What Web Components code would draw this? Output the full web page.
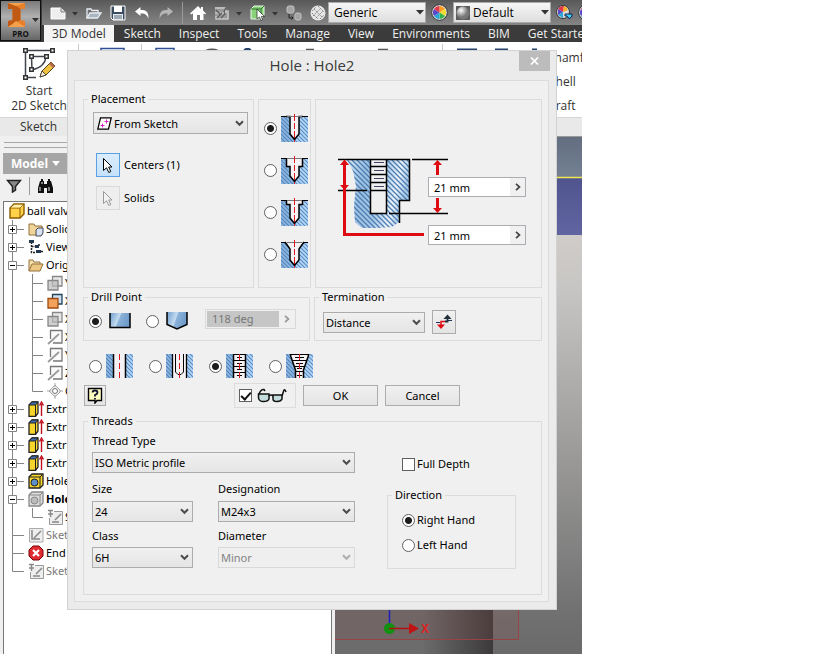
<!DOCTYPE html>
<html lang="en">
<head>
<meta charset="utf-8">
<title>Hole : Hole2</title>
<style>
  body { margin: 0; background: #fff; overflow: hidden; }
</style>
</head>
<body>
<cad-app></cad-app>
<script>
const UI = '"Open Sans", "Noto Sans", sans-serif';
const DLG = '"Noto Sans", "Open Sans", sans-serif';

function define(name, css, html) {
  const tpl = document.createElement('template');
  const render = typeof html === 'function' ? html : () => html;
  customElements.define(name, class extends HTMLElement {
    constructor() { super(); this.attachShadow({ mode: 'open' }); }
    connectedCallback() {
      if (this.shadowRoot.childNodes.length) return;
      tpl.innerHTML = `<style>*{box-sizing:border-box}:host{box-sizing:border-box}${css}</style>${render(this)}`;
      this.shadowRoot.append(tpl.content.cloneNode(true));
    }
  });
}

/* ---------- shared drawing parts ---------- */
const hatch = `<defs>
  <pattern id="h" width="4" height="4" patternUnits="userSpaceOnUse"><rect width="4" height="4" fill="#b4d8fa"/><path d="M-1 -1L5 5M-1 3L1 5M3 -1L5 1" stroke="#5c8cc0" stroke-width="1.2"/></pattern>
  <pattern id="k" width="4" height="4" patternUnits="userSpaceOnUse"><rect width="4" height="4" fill="#8db6e0"/><path d="M-1 -1L5 5M-1 3L1 5M3 -1L5 1" stroke="#5285bb" stroke-width="1.1"/></pattern></defs>`;
const holeIcon = (d) => `<svg width="27" height="28" viewBox="0 0 27 28">${hatch}
  <rect y="2" width="14" height="26" fill="url(#k)"/><rect x="14" y="2" width="13" height="26" fill="url(#h)"/>
  <path d="${d}" fill="#f4f1f4" stroke="#000" stroke-width="1.5"/><path d="M6 2.5H21" stroke="#777"/><path d="M0 2.5H5M22 2.5H27" stroke="#000"/>
  <path d="M13.5 0V28" fill="none" stroke="#e01822" stroke-dasharray="7 2 6 2"/></svg>`;
const HOLES = [
  ['Drilled', 'M5 2.5H9V20L13.5 25.5L18 20V2.5H22'],
  ['Counterbore', 'M5.5 2V10.5H9V20L13.5 25.5L18 20V10.5H21.5V2'],
  ['Spotface', 'M5.5 2V6.5H9V20L13.5 25.5L18 20V6.5H21.5V2'],
  ['Countersink', 'M4 2L9 9V20L13.5 25.5L18 20V9L23 2']
];
const threadIcon = (inner) => `<svg width="27" height="24" viewBox="0 0 27 24">${hatch}
  <rect width="14" height="24" fill="url(#k)"/><rect x="14" width="13" height="24" fill="url(#h)"/>${inner}
  <path d="M13.5 0V24" stroke="#e01822" stroke-dasharray="6 3"/></svg>`;
const THREADS = [
  ['Simple hole', '<path d="M7.5 -1V25H19.5V-1z" fill="#f4f1f4" stroke="#000" stroke-width="1.5"/>'],
  ['Clearance hole', '<path d="M6.5 -1V25H20.5V-1z" fill="#f4f1f4" stroke="#000" stroke-width="1.3"/><path d="M9.5 0V18L12 20.5H15L17.5 18V0" fill="none" stroke="#000"/>'],
  ['Tapped hole', '<path d="M7.5 -1V25H19.5V-1z" fill="#f4f1f4" stroke="#000" stroke-width="1.5"/><path d="M8 .5H19M8 6.5H19M8 12.5H19M8 18.5H19M11 3.5H16M11 9.5H16M11 15.5H16M11 21.5H16" stroke="#000"/>'],
  ['Taper tapped hole', '<path d="M4 -1L5 3L9.5 16V25H17.5V16L22 3L23 -1z" fill="#f4f1f4" stroke="#000" stroke-width="1.5"/><path d="M4 .5H23M6 6.5H21M8 12.5H19M10 17.5H17M9 3.5H18M10 9.5H17M11 14.5H16M11 21.5H16" stroke="#000"/>']
];

const radioCss = `
  input[type=radio]{appearance:none;flex:none;margin:0;width:13px;height:13px;border:1px solid #606060;border-radius:50%;background:#fff}
  input[type=radio]:checked{background:radial-gradient(circle,#1c1c1c 0 3px,#fff 4px)}
  label{display:flex;align-items:center}
  svg{display:block;flex:none}`;

/* ---------- small controls ---------- */
define('pick-list', `
  :host{display:grid;height:21px;font:11px ${DLG};color:#000}
  select{appearance:none;grid-area:1/1;width:100%;height:100%;margin:0;padding:0 18px 0 2px;border:1px solid #acacac;border-radius:0;background:linear-gradient(#f0f0f0,#e5e5e5);font:inherit;color:inherit}
  select:disabled{border-color:#d9d9d9;background:#efefef;color:#838383;opacity:1}
  .v,.i{grid-area:1/1;align-self:center;pointer-events:none}
  .v{justify-self:end;margin-right:4px}
  .i{margin-left:4px}
  :host([icon]) select{padding-left:20px}
  select:disabled~.v{opacity:.4}`,
  el => `<select aria-label="${el.getAttribute('label')}" ${el.hasAttribute('disabled') ? 'disabled' : ''}><option>${el.getAttribute('value')}</option></select>
  ${el.hasAttribute('icon') ? '<svg class="i" width="15" height="13" viewBox="0 0 15 13"><path d="M3.5 .8H14.2L11.5 12.2H.8z" fill="#fff" stroke="#000" stroke-width="1.3"/><path d="M9.5 2.5v4M7.5 4.5h4M5.5 6.5v4M3.5 8.5h4" stroke="#d02ad0"/></svg>' : ''}
  <svg class="v" width="9" height="7" viewBox="0 0 9 7"><path d="M1 1.2L4.5 4.8L8 1.2" fill="none" stroke="#4c4c4c" stroke-width="2"/></svg>`);

define('value-box', `
  :host{display:flex;min-width:0;height:20px;border:1px solid #abadb3;background:#f0f0f0;font:11px ${DLG};color:#000}
  input{flex:1;width:0;min-width:0;margin:0;border:0;padding:0 5px;background:#fff;font:inherit;color:inherit}
  button{width:15px;margin:0;padding:0;border:0;background:#f0f0f0;display:grid;place-items:center}
  path{stroke:#444}
  :host([disabled]){border-color:#d9d9d9;padding:1px;color:#777}
  :host([disabled]) input{background:#c6c6c6}
  :host([disabled]) path{stroke:#999}`,
  el => { const d = el.hasAttribute('disabled') ? 'disabled' : '';
    return `<input type="text" aria-label="${el.getAttribute('label')}" value="${el.getAttribute('value')}" ${d}><button aria-label="More ${el.getAttribute('label')}" ${d}><svg width="6" height="8" viewBox="0 0 6 8"><path d="M1 .8L4.5 4L1 7.2" fill="none" stroke-width="1.7"/></svg></button>`; });

define('push-button', `
  :host{display:block;height:21px}
  button{width:100%;height:100%;margin:0;padding:0;border:1px solid #acacac;background:linear-gradient(#f1f1f1,#e4e4e4);font:11px ${DLG};color:#000;display:grid;place-items:center}
  :host([pressed]) button{border-color:#5a9fe0;background:linear-gradient(#dcedfc,#c4e1fb)}
  :host([faint]) button{border-color:#dadada;background:#eee}
  ::slotted(svg){display:block}`,
  el => `<button ${el.hasAttribute('label') ? `aria-label="${el.getAttribute('label')}"` : ''} ${el.hasAttribute('faint') ? 'disabled' : ''}><slot></slot></button>`);

define('group-box', `
  :host{display:grid;font:11px/14px ${DLG};color:#000}
  fieldset{min-width:0;margin:0;padding:0;border:1px solid #dcdcdc}
  legend{margin-left:4px;padding:0 3px}
  .bare{margin-top:7px}`,
  el => el.hasAttribute('label') ? `<fieldset><legend>${el.getAttribute('label')}</legend><slot></slot></fieldset>`
    : `<fieldset class="bare"><slot></slot></fieldset>`);

/* ---------- dialog sections ---------- */
const arrow = (fill, line) => `<svg width="12" height="17" viewBox="0 0 12 17"><path d="M1.5 1.5V13.5L4.5 10.8L6.8 15.5L8.8 14.6L6.7 10H10z" fill="${fill}" stroke="${line}"/></svg>`;
define('placement-panel', `
  :host{display:grid}
  .in{display:grid;gap:9px;padding:6px 5px 0 9px}
  pick-list{height:22px;margin-bottom:10px}
  .r{display:flex;align-items:center;gap:4px;padding-left:3px}
  push-button{width:24px;height:24px}`,
  `<group-box label="Placement"><div class="in"><pick-list label="Placement" value="From Sketch" icon></pick-list>
   <div class="r"><push-button label="Centers" pressed>${arrow('#fff', '#000')}</push-button><span>Centers (1)</span></div>
   <div class="r"><push-button label="Solids" faint>${arrow('#f2f2f2', '#999')}</push-button><span>Solids</span></div></div></group-box>`);

define('hole-types', `:host{display:grid}${radioCss}
  .in{display:grid;gap:14px;padding:14px 0 0 5px} label{gap:4px}`,
  `<group-box><div class="in">${HOLES.map(([n, d], i) => `<label><input type="radio" name="hole" aria-label="${n}" ${i ? '' : 'checked'}>${holeIcon(d)}</label>`).join('')}</div></group-box>`);

define('hole-preview', `
  :host{display:grid;min-width:0}
  .in{display:grid;grid-template-columns:minmax(0,1fr);padding:56px 15px 0 22px}
  svg,.f{grid-area:1/1}
  .f{justify-self:end;width:98px;display:grid;grid-template-columns:minmax(0,1fr);gap:28px;align-content:start;padding-top:21px}`,
  `<group-box><div class="in"><svg width="112" height="82" viewBox="0 0 112 82">
    <defs><pattern id="p" width="5" height="5" patternUnits="userSpaceOnUse"><path d="M-1 -1L6 6M-1 4L1 6M4 -1L6 1" stroke="#4d7cb0" stroke-width="1.3"/></pattern>
    <linearGradient id="g" x2="1" y2=".25"><stop offset="0" stop-color="#cfe4f8"/><stop offset=".3" stop-color="#7fb0df"/><stop offset=".6" stop-color="#8ebae4"/><stop offset=".85" stop-color="#eaf5ff"/><stop offset="1" stop-color="#8fbbe5"/></linearGradient></defs>
    <path d="M9 4H71V44H61V66L54 71L40 72H24L17 66L16 50L18 30L15 15z" fill="url(#g)" opacity=".75"/>
    <path d="M9 4H71V44H61V66L54 71L40 72H24L17 66L16 50L18 30L15 15z" fill="url(#p)"/>
    <path d="M32.5 4V57.5H48.5V4" fill="#f0f0f0" stroke="#000" stroke-width="1.5"/>
    <path d="M33 10.5H48M33 18.5H48M33 26.5H48M33 34.5H48" stroke="#000" stroke-width="1.3"/>
    <path d="M36 6.5H46M36 14.5H46M36 22.5H46M36 30.5H46" stroke="#446"/>
    <path d="M0 3.5H71.5V44.5H61.5V67M74 3.5H110M0 34.5H29M51 57.5H110" fill="none" stroke="#000" stroke-width="1.5"/>
    <path d="M6.5 6V78.5H86" fill="none" stroke="#df0b12" stroke-width="3"/>
    <path d="M99.5 8V19M99.5 42V54" stroke="#df0b12" stroke-width="3"/>
    <path d="M6.5 3.5L11 9H2zM6.5 34L11 29H2zM99.5 4L104 9H95zM99.5 57L104 52H95z" fill="#df0b12"/></svg>
   <div class="f"><value-box label="thread depth" value="21 mm"></value-box><value-box label="hole depth" value="21 mm"></value-box></div></div></group-box>`);

const cup = d => `<svg width="22" height="18" viewBox="0 0 22 18"><defs><linearGradient id="g" x2="1" y2=".3"><stop offset="0" stop-color="#6e9fcf"/><stop offset=".5" stop-color="#c5dcf0"/><stop offset=".55" stop-color="#8ab1d8"/><stop offset="1" stop-color="#6f9ccb"/></linearGradient></defs><path d="${d}" fill="url(#g)" stroke="#000" stroke-width="1.5"/></svg>`;
define('drill-point', `:host{display:grid;min-width:0}${radioCss}
  .in{display:flex;align-items:center;padding:0 13px 0 5px;height:34px;gap:15px} label{gap:7px}
  value-box{flex:1;margin-left:2px;margin-bottom:5px}`,
  `<group-box label="Drill Point"><div class="in">
   <label><input type="radio" name="dp" aria-label="Flat" checked>${cup('M1 1V15.5H21V1')}</label>
   <label><input type="radio" name="dp" aria-label="Angle">${cup('M1 0V12.5L11 17L21 12.5V0')}</label>
   <value-box label="angle" value="118 deg" disabled></value-box></div></group-box>`);

define('termination-panel', `:host{display:grid}
  .in{display:flex;align-items:center;gap:7px;height:36px;padding:0 0 0 8px} pick-list{width:102px} push-button{width:24px;height:24px}`,
  `<group-box label="Termination"><div class="in"><pick-list label="Termination" value="Distance"></pick-list><push-button label="Flip direction"><svg width="18" height="16" viewBox="0 0 18 16"><path d="M1 8.5H5M13 6.5H17" stroke="#235" /><path d="M6 11V7.5H10" fill="none" stroke="#df0b12" stroke-width="1.5"/><path d="M10 7.5H12.5V4" fill="none" stroke="#24303c" stroke-width="1.8"/><path d="M2 10.5H10L6 15z" fill="#df0b12"/><path d="M8.5 5H16.5L12.5 .5z" fill="#24303c"/></svg></push-button></div></group-box>`);

define('thread-modes', `:host{display:block}${radioCss}
  .in{display:flex;gap:20px;padding-left:6px} label{gap:4px;width:40px} label svg{margin-right:-4px}`,
  `<div class="in">${THREADS.map(([n, d], i) => `<label><input type="radio" name="mode" aria-label="${n}" ${i === 2 ? 'checked' : ''}>${threadIcon(d)}</label>`).join('')}</div>`);

const checkCss = `
  input[type=checkbox]{appearance:none;flex:none;margin:0;width:13px;height:13px;border:1px solid #606060;background:#fff;display:grid;place-items:center}
  input[type=checkbox]:checked::before{content:"";width:8px;height:4px;border:solid #111;border-width:0 0 2px 2px;transform:translateY(-1px) rotate(-48deg)}`;
define('action-row', `:host{display:flex;align-items:center;gap:7px}${checkCss}
  .help{width:22px;margin-right:auto}
  .see{display:flex;align-items:center;gap:5px;height:25px;width:62px;padding-left:4px;border:1px solid #dcdcdc}
  .ok{width:75px}.c{width:75px;margin-right:82px}`,
  `<push-button class="help" label="Help"><svg width="16" height="17" viewBox="0 0 16 17"><path d="M1.5 1.5H14.5V13.5H10L8 16V13.5H1.5z" fill="#fffcc0" stroke="#000" stroke-width="1.4"/><path d="M5.5 5.5Q5.5 3.5 8 3.5T10.5 5.5Q10.5 7 8 8V9.5M8 11V12.5" fill="none" stroke="#101030" stroke-width="1.8"/></svg></push-button>
   <label class="see"><input type="checkbox" aria-label="Preview" checked><svg width="30" height="15" viewBox="0 0 30 15" fill="none" stroke="#111" stroke-width="1.5"><path d="M1.5 6H12V11Q11 13.5 6.5 13.5T1.5 10zM16 7H25V11Q24 13.5 20 13.5T16 11z" fill="#c5dcde"/><path d="M12 8Q14 6 16 8M2 6Q4 1 7 1.5L8 3M25 8L27 2Q28 1 29 4"/></svg></label>
   <push-button class="ok">OK</push-button><push-button class="c">Cancel</push-button>`);

define('direction-group', `:host{display:grid}${radioCss}
  .in{display:grid;gap:9px;padding:10px 14px 15px} label{gap:2px;height:16px}`,
  `<group-box label="Direction"><div class="in"><label><input type="radio" name="dir" checked>Right Hand</label><label><input type="radio" name="dir">Left Hand</label></div></group-box>`);

define('threads-panel', `:host{display:grid}${checkCss}
  .in{display:grid;grid-template-columns:264px 1fr;column-gap:31px;padding:6px 25px 25px 8px}
  .l{display:grid;grid-template-columns:101px 137px;column-gap:25px;align-content:start}
  .w{grid-column:1/-1;margin-bottom:9px}
  .f{display:grid;gap:4px;align-content:start}
  .s{gap:5px;margin-bottom:7px}
  .r{display:grid;gap:17px;align-content:start;padding-top:23px}
  .full{display:flex;align-items:center;gap:2px;padding-left:15px}`,
  `<group-box label="Threads"><div class="in"><div class="l">
    <div class="f w"><span>Thread Type</span><pick-list label="Thread Type" value="ISO Metric profile"></pick-list></div>
    <div class="f s"><span>Size</span><pick-list label="Size" value="24"></pick-list></div>
    <div class="f s"><span>Designation</span><pick-list label="Designation" value="M24x3"></pick-list></div>
    <div class="f"><span>Class</span><pick-list label="Class" value="6H"></pick-list></div>
    <div class="f"><span>Diameter</span><pick-list label="Diameter" value="Minor" disabled></pick-list></div></div>
   <div class="r"><label class="full"><input type="checkbox">Full Depth</label><direction-group></direction-group></div></div></group-box>`);

define('hole-dialog', `
  :host{display:block;border:1px solid #d2d2d2;background:#ebebeb;padding:0 7px 7px 6px;font:11px/14px ${DLG};color:#000}
  header{display:grid;grid-template-columns:31px 1fr 31px;height:29px;margin-right:-1px}
  h1{grid-column:2;margin:0;font:15px/29px ${UI};color:#3a3a3a;text-align:center}
  header button{grid-column:3;width:31px;height:20px;border:0;padding:0;margin:0;background:#bcbcbc;display:grid;place-items:center}
  .client{border:1px solid #dcdcdc;background:#f0f0f0;padding:11px 6px 6px 8px}
  .top{display:grid;grid-template-columns:171px 53px minmax(0,1fr);column-gap:4px;height:196px}
  .mid{display:grid;grid-template-columns:227px minmax(0,1fr);column-gap:4px;margin-top:2px;height:50px}
  thread-modes{margin-top:14px}
  action-row{margin:5px 0 6px 1px}
  threads-panel{min-height:179px}`,
  `<header><h1>Hole : Hole2</h1><button aria-label="Close"><svg width="9" height="8" viewBox="0 0 9 8"><path d="M1 .5L8 7.5M8 .5L1 7.5" stroke="#fff" stroke-width="1.7"/></svg></button></header>
   <div class="client"><div class="top"><placement-panel></placement-panel><hole-types></hole-types><hole-preview></hole-preview></div>
   <div class="mid"><drill-point></drill-point><termination-panel></termination-panel></div>
   <thread-modes></thread-modes><action-row></action-row><threads-panel></threads-panel></div>`);

/* ---------- application frame ---------- */
const wheel = '<svg width="17" height="17" viewBox="0 0 17 17"><circle cx="8.5" cy="8.5" r="7.8" fill="#f2f2f2" stroke="#333"/><path d="M8.5 8.5V2A6.5 6.5 0 0 1 14 5z" fill="#ff9c20"/><path d="M8.5 8.5L14 5A6.5 6.5 0 0 1 14 12z" fill="#f2dc30"/><path d="M8.5 8.5L14 12A6.5 6.5 0 0 1 8.5 15z" fill="#35b04a"/><path d="M8.5 8.5V15A6.5 6.5 0 0 1 3 12z" fill="#29a7d9"/><path d="M8.5 8.5L3 12A6.5 6.5 0 0 1 3 5z" fill="#5a48c8"/><path d="M8.5 8.5L3 5A6.5 6.5 0 0 1 8.5 2z" fill="#e23a4a"/></svg>';
const caret = '<svg width="4" height="16" viewBox="0 0 4 16" overflow="visible"><path d="M-2 7H4L1 10.5z" fill="#333"/></svg>';
define('bar-list', `
  :host{display:grid;width:98px;height:21px;font:12px ${UI};color:#000}
  select{appearance:none;grid-area:1/1;margin:0;border:1px solid #aaa;border-radius:0;padding:0 14px 0 5px;background:linear-gradient(#f6f6f6,#dedede);font:inherit;color:inherit}
  svg{grid-area:1/1;align-self:center;pointer-events:none}
  .v{justify-self:end;margin-right:2px}.b{margin-left:3px}
  :host([ball]) select{padding-left:19px}`,
  el => `<select aria-label="${el.getAttribute('label')}"><option>${el.getAttribute('value')}</option></select>${el.hasAttribute('ball') ? '<svg class="b" width="14" height="14" viewBox="0 0 14 14"><defs><radialGradient id="r" cx=".35" cy=".3"><stop stop-color="#fff"/><stop offset=".5" stop-color="#bbb"/><stop offset="1" stop-color="#777"/></radialGradient></defs><rect width="14" height="14" fill="#5c5c5c"/><circle cx="7" cy="7" r="6.5" fill="url(#r)"/></svg>' : ''}<svg class="v" width="8" height="5" viewBox="0 0 8 5"><path d="M0 0H8L4 4.5z" fill="#333"/></svg>`);

define('quick-bar', `
  :host{display:flex;align-items:center;height:25px;padding-left:8px;background:linear-gradient(#585858,#6c6c6c 40%,#858585);overflow:hidden}
  div{display:flex;align-items:center;flex:none}
  .a{gap:8px;margin-right:2px}.b{gap:5px}
  svg{display:block;flex:none} .s{width:1px;height:22px;margin-right:-1px;background:#999}`,
  `<div class="a">
   <svg width="16" height="16" viewBox="0 0 16 16"><path d="M1 3H11L15 7V14H1z" fill="#eee" stroke="#fff"/><path d="M11 3V7H15" fill="#ccc" stroke="#888"/></svg>${caret}
   <svg width="16" height="16" viewBox="0 0 16 16" fill="none" stroke="#e8eef4" stroke-width="1.3"><path d="M1 13V4H5L6 5.5H12V8"/><path d="M1 13L4 8H15L11.5 13z" fill="#a9b4c0"/></svg>
   <svg width="16" height="16" viewBox="0 0 16 16"><path d="M1 1H15V15H3L1 13z" fill="#3c4c60" stroke="#fff"/><rect x="4" y="1" width="8" height="6" fill="#fff"/><rect x="3" y="9" width="10" height="6" fill="#e5ebf0"/><path d="M4 11H12M4 13H12" stroke="#567"/></svg>
   <svg width="16" height="16" viewBox="0 0 16 16"><path d="M1 6.5L6.5 2V5H9Q15 5.5 14.5 14Q13 9 9 8.5H6.5V11z" fill="#fff"/></svg>
   <svg width="16" height="16" viewBox="0 0 16 16"><path d="M15 6.5L9.5 2V5H7Q1 5.5 1.5 14Q3 9 7 8.5H9.5V11z" fill="#b5b5b5"/></svg><span class="s"></span>
   <svg width="16" height="16" viewBox="0 0 16 16"><path d="M8 1L0 8.5L1.5 9.5L3 8.3V15H7V10H10V15H13.5V8.3L15 9.5L16 8.5L13 5.5V2H11V4z" fill="#fff"/></svg>
   <svg width="16" height="16" viewBox="0 0 16 16"><path d="M1 2H10L15 7V14H1z" fill="#9a9a9a"/><path d="M1 3H11V8H1M7 9L14 6V14H2V11" fill="none" stroke="#c6c6c6" stroke-width="1.4"/><path d="M2 5L6 9M12 3Q9 6 11 9L7 13M3 13L8 8" fill="none" stroke="#5c5c5c" stroke-width="1.3"/></svg>${caret}
   <svg width="16" height="16" viewBox="0 0 16 16"><path d="M1 4L4 1H14V10L11 14H1z" fill="#8ad078" stroke="#eaffea"/><path d="M1 4H11V14M11 4L14 1" fill="none" stroke="#2c7a2c"/><path d="M7 4V14L9.5 12L11 15.5L12.5 14.8L11.5 11.5H14.5z" fill="#fff" stroke="#222" stroke-width=".7"/></svg>${caret}
   <svg width="16" height="16" viewBox="0 0 16 16"><rect x="1" y="1" width="7" height="7" rx="2" fill="#a4a4a4" stroke="#c4c4c4"/><rect x="9" y="8" width="6" height="7" rx="2" fill="#a4a4a4" stroke="#c4c4c4"/><path d="M3 9V13H7M5.500 11.500L7 13L5.500 14.500" fill="none" stroke="#222"/></svg>
   <svg width="16" height="16" viewBox="0 0 16 16"><circle cx="8" cy="8" r="7.5" fill="#e6e6e6"/><path d="M2 6L6 2M3 11L11 3M6 13L13 6M10 14L14 10M4 4L12 12M8 1L14 7M2 8L8 14" stroke="#8a8a8a" stroke-dasharray="2 1"/></svg></div>
   <div class="b"><bar-list label="Material" value="Generic"></bar-list>${wheel}<bar-list label="Appearance" value="Default" ball></bar-list>
   <svg width="17" height="18" viewBox="0 0 17 18"><circle cx="7" cy="8" r="6.5" fill="#ddd" stroke="#333"/><path d="M7 8L2 5A6 6 0 0 1 8 2z" fill="#e23a4a"/><path d="M7 8L8 2A6 6 0 0 1 12 6z" fill="#ffae20"/><path d="M7 8L2 5V11z" fill="#5a48c8"/><path d="M7 8L2 11L7 14z" fill="#29a7d9"/><path d="M9 10H16V12L13.5 15L11 12H9z" fill="#3ed0f0" stroke="#125"/></svg>${wheel}</div>`);

define('ribbon-tabs', `
  :host{display:flex;align-items:stretch;height:17px;padding-left:2px;background:#3b3b3b;overflow:hidden;font:12px/17px ${UI};color:#f0f0f0}
  nav{display:flex;flex:none}
  a{color:inherit;text-decoration:none;padding:0 9px;white-space:nowrap}
  a.on{padding:0 8px;margin-right:1px;background:#f4f4f4;color:#333}`,
  `<nav>${['3D Model', 'Sketch', 'Inspect', 'Tools', 'Manage', 'View', 'Environments', 'BIM', 'Get Started'].map((t, i) => `<a href="#"${i ? '' : ' class="on"'}>${t}</a>`).join('')}</nav>`);

define('app-logo', `
  :host{display:block}
  button{width:41px;height:41px;margin:0;padding:0;border:1px solid #111;background:linear-gradient(#7a7a7a,#b0b0b0 40%,#666);display:grid;justify-items:center;align-content:end;font:bold 8px/12px ${UI};color:#111}
  svg{display:block}`,
  `<button><svg width="39" height="27" viewBox="0 0 39 27"><path d="M7 2H24V8H19.5V19L24 20V26H7V20L11.5 19V8H7z" fill="#e8802a"/><path d="M7 2L15.5 5L19.5 8V19L11.5 23L7 26V20L11.5 19V8H7z" fill="#c05a14"/><path d="M7 2H24L15 5zM11.5 23L15 20L24 26H7z" fill="#f5a04a"/><path d="M31 17H38L34.5 21z" fill="#333"/></svg>PRO</button>`);

define('ribbon-bar', `
  :host{display:grid;grid-template:76px 18px/minmax(0,1fr);background:#fff;font:12px/15px ${UI};color:#333;overflow:hidden;border-bottom:1px solid #a9a9a9}
  .t{display:grid;grid-template-columns:78px minmax(0,1fr) 35px;border-bottom:1px solid #d5d5d5;overflow:hidden}
  button{border:0;margin:0;padding:6px 0 0;background:none;font:inherit;color:inherit;display:grid;justify-items:center;align-content:start;gap:2px}
  .list{display:grid;gap:9px;align-content:start;justify-items:start;padding-top:8px;overflow:hidden}
  .list button{padding:0;display:block}
  .list .d{padding-left:2px}
  .n{background:#e9e9e9;padding-left:20px;line-height:17px}`,
  `<div class="t"><button><svg width="32" height="33" viewBox="0 0 32 33"><path d="M2.5 2.5H29.5M2.5 2.5V29.5H13M8.5 8.5H23Q22 19 9 22z" fill="none" stroke="#40444c" stroke-width="1.5"/><path d="M0 0h5v5H0zM27 0h5v5h-5zM0 27h5v5H0zM6 6h5v5H6zM21 6h5v5h-5zM6 19h5v5H6z" fill="#333"/><path d="M1.500 1.500h2v2h-2zM28.500 1.500h2v2h-2zM1.500 28.500h2v2h-2zM7.500 7.500h2v2h-2zM22.500 7.500h2v2h-2zM7.500 20.500h2v2h-2z" fill="#fff"/><path d="M17 29L19 23L28 14L32 18L23 27z" fill="#f0c040" stroke="#554420"/><path d="M28 14L32 18L30 20L26 16z" fill="#b06a50"/><path d="M17 29L19 23L23 27z" fill="#fff0d0" stroke="#444"/></svg><span>Start<br>2D Sketch</span></button>
   <svg width="469" height="12" viewBox="78 42 469 12"><path d="M78.5 44V54M141.5 44V54M442.5 44V54" stroke="#c8c8c8"/><path d="M101 50V48.5H124V50M156 50V48.5H174V50" fill="none" stroke="#2c4f96" stroke-width="1.5"/><path d="M206 50.500Q212 48 218 50.500M306 49.5H314M378 49.5H388" fill="none" stroke="#555" stroke-width="1.5"/><path d="M244 50L246 49H249L251 50M457 49.5H477M495 49.5H508M532 49.5H537" fill="none" stroke="#24426c" stroke-width="1.8"/></svg>
   <div class="list"><button>Chamfer</button><button class="d">Shell</button><button>Draft</button></div></div><div class="n">Sketch</div>`);

/* ---------- model browser ---------- */
const I = {
  part: '<path d="M1 5L5 1H15V11L11 15H1z" fill="#ffd24a" stroke="#8a5a00" stroke-width="1.4"/><path d="M1 5H11V15M11 5L15 1" fill="none" stroke="#8a5a00"/><path d="M1.8 4.6L5.3 1.7H14L11 4.5z" fill="#fff0b0"/>',
  solid: '<path d="M1 14V3H6L7 5H14V14z" fill="#f0d59a" stroke="#94713a"/><path d="M8 9L10 7H15V12L13 15H8z" fill="#d7e3f2" stroke="#445"/>',
  view: '<path d="M1 2.500H6M3.500 3V13.500H7M3.500 7.500H7M10 6H12M13 12.500H16" fill="none" stroke="#222" stroke-width="1.500" stroke-dasharray="2 1"/><path d="M1 1h5v3H1zM7 6h4v3H7zM8 11h5v3H8z" fill="#23384f"/>',
  open: '<path d="M1 14V3H5L6 5H12V7" fill="#f5dfaa" stroke="#94713a"/><path d="M1 14L4 7H15L12 14z" fill="#ecc983" stroke="#94713a"/>',
  plane: '<path d="M5.5 1.5H15V11H5.5z" fill="#e8e8e8" stroke="#888" stroke-width="1.3"/><path d="M1 5.5H11V15H1z" fill="#bbb" fill-opacity=".7" stroke="#888" stroke-width="1.3"/>',
  planeOn: '<path d="M5.5 1.5H15V11H5.5z" fill="#cfe0f5" stroke="#245" stroke-width="1.3"/><path d="M1 5.5H11V15H1z" fill="#f3a25c" stroke="#a04a10" stroke-width="1.3"/>',
  axis: '<path d="M3.500 10V1.500H15V14H6" fill="#fafafa" stroke="#777" stroke-width="1.3"/><path d="M1 15L12 5" stroke="#999" stroke-width="1.7"/>',
  point: '<path d="M8 2L14 8L8 14L2 8z" fill="#eee" stroke="#aaa"/><path d="M8 0V4M8 12V16M0 8H4M12 8H16" stroke="#aaa"/><circle cx="8" cy="8" r="2.5" fill="#fff" stroke="#777"/>',
  ext: '<path d="M1 4L4 1H10V12L7.5 15.5H1z" fill="#f7d62c" stroke="#222" stroke-width="1.3"/><path d="M1 4L4 1H10L7.5 4z" fill="#3f6fae" stroke="#222"/><path d="M7.5 4V15" stroke="#222"/><path d="M13.5 15V3M11.5 4.5L13.5 1L15.5 4.5" fill="none" stroke="#c01020" stroke-width="1.4"/>',
  hole: '<path d="M1 4L4 1H15V12L12 15H1z" fill="#f7d62c" stroke="#222" stroke-width="1.3"/><path d="M1 4H12V15M12 4L15 1" fill="none" stroke="#222"/><circle cx="6.5" cy="9.5" r="3.5" fill="#5f8fc8" stroke="#222"/>',
  holeOff: '<path d="M1 4L4 1H15V12L12 15H1z" fill="#ddd" stroke="#888" stroke-width="1.3"/><path d="M1 4H12V15M12 4L15 1" fill="none" stroke="#888"/><circle cx="6.5" cy="9.5" r="3.5" fill="#bbb" stroke="#888"/>',
  sk: '<path d="M1.5 1.5H15V15H1.5z" fill="#eee" stroke="#aaa"/><path d="M4 3V12H12M6 11L13 4" fill="none" stroke="#888" stroke-width="1.5"/>',
  skp: '<path d="M7 2.500H15.5V15.5H2.500V9" fill="#eee" stroke="#999"/><path d="M1 1.500H6M3.5 1V8M1 5H6M5 13H12M8 11L14 5" fill="none" stroke="#888" stroke-width="1.5"/>',
  end: '<path d="M5 1H11L15 5V11L11 15H5L1 11V5z" fill="#de2c32" stroke="#700"/><path d="M5 5L11 11M11 5L5 11" stroke="#fff" stroke-width="2.2"/>'
};
const ROWS = [
  ['ball valv', 'part', 'r'], ['Solid', 'solid', '+'], ['View:', 'view', '+'], ['Origi', 'open', '-'],
  ['Y', 'plane', 'c'], ['X', 'planeOn', 'c'], ['X', 'plane', 'c'], ['X', 'axis', 'c'], ['Y', 'axis', 'c'], ['Z', 'axis', 'c'], ['C', 'point', 'l'],
  ['Extru', 'ext', '+'], ['Extru', 'ext', '+'], ['Extru', 'ext', '+'], ['Extru', 'ext', '+'], ['Hole', 'hole', '+'], ['Hole', 'holeOff', '-', 'b'],
  ['S', 'skp', 'l'], ['Sketc', 'sk', 't', 'g'], ['End', 'end', 't'], ['Sketc', 'skp', 'e', 'g']
];
define('tree-row', `
  :host{display:flex;align-items:center;height:18px;white-space:nowrap;font:11px/18px ${DLG};color:#000}
  svg{flex:none;display:block} .i{margin-right:2px}
  :host([tone=g]){color:#777}:host([tone=b]){font-weight:bold}`,
  el => {
    const k = el.getAttribute('kind'), sub = k === 'c' || k === 'l';
    const w = k === 'r' ? 5 : sub ? 43 : 24;
    let d = '';
    if (k !== 'r') d += k === 'e' ? 'M8.5 0V9.5H20' : 'M8.5 0V18';
    if ('+-t'.includes(k)) d += 'M8.5 9.5H20';
    if (k === 'c') d += 'M28.5 0V18M28.5 9.5H39';
    if (k === 'l') d += 'M28.5 0V9.5H39';
    const box = k === '+' || k === '-' ? `<path d="M4.5 5.5H12.5V13.5H4.5z" fill="#fff" stroke="#848484"/><path d="M6 9.5H11${k === '+' ? 'M8.5 7V12' : ''}" stroke="#000"/>` : '';
    return `<svg width="${w}" height="18" viewBox="0 0 ${w} 18"><path d="${d}" fill="none" stroke="#848484"/>${box}</svg><svg class="i" width="16" height="16" viewBox="0 0 16 16">${I[el.getAttribute('icon')]}</svg><slot></slot>`;
  });
define('model-browser', `
  :host{display:flex;flex-direction:column;background:#f0f0f0;padding:6px 0 0 3px;overflow:hidden}
  .grip{height:6px;border:solid #a8a8a8;border-width:1px 0;margin:0 0 5px 1px}
  h2{margin:0;height:21px;padding-left:8px;background:#a6a6a6;color:#fff;font:bold 12px/20px ${UI};display:flex;align-items:center;gap:4px}
  .tools{display:flex;align-items:center;gap:7px;height:26px;padding:0 0 2px 3px}
  .tools button{border:0;margin:0;padding:0;background:none;display:block}
  .tools i{width:1px;height:18px;background:#999}
  svg{display:block}
  .tree{flex:1;background:#fff;border:1px solid #777;border-bottom:0;margin-top:1px}`,
  `<div class="grip"></div><h2>Model<svg width="8" height="5" viewBox="0 0 8 5"><path d="M0 0H8L4 5z" fill="#fff"/></svg></h2>
   <div class="tools"><button aria-label="Filter"><svg width="16" height="14" viewBox="0 0 16 14"><path d="M1.5 1.5H14.5L9.5 7.5V11L6.5 13V7.5z" fill="#888" stroke="#222" stroke-width="1.5"/></svg></button><i></i>
   <button aria-label="Find"><svg width="17" height="15" viewBox="0 0 17 15"><path d="M3 2H7V5H10V2H14L16 9V14H10V9H7V14H1V9zM4 0H6V2H4zM11 0H13V2H11z" fill="#111"/><path d="M3 8V12M12 8V12M5 3V5" stroke="#eee"/></svg></button></div>
   <div class="tree">${ROWS.map(r => `<tree-row icon="${r[1]}" kind="${r[2]}" tone="${r[3] || ''}">${r[0]}</tree-row>`).join('')}</div>`);

define('model-view', `
  :host{display:block;overflow:hidden;background:linear-gradient(#cfccc9 100px,#c8c6c4 150px,#707070 480px,#6a6a6a)}
  svg{display:block}`,
  `<svg width="100%" height="518" viewBox="0 0 247 518" preserveAspectRatio="xMinYMin slice"><defs>
   <linearGradient id="a" x2="1"><stop offset="0" stop-color="#6c6c6c"/><stop offset=".55" stop-color="#6c6c6c"/><stop offset="1" stop-color="#3c3a3a"/></linearGradient>
   <linearGradient id="s" x2="0" y2="1"><stop offset="0" stop-color="#626d80"/><stop offset="1" stop-color="#748193"/></linearGradient>
   <linearGradient id="u" x2="0" y2="1"><stop offset="0" stop-color="#50548e"/><stop offset="1" stop-color="#6064a0"/></linearGradient></defs>
   <rect width="247" height="41" fill="url(#s)"/><rect y="42" width="247" height="57" fill="url(#u)"/><path d="M0 41.5H247" stroke="#f0e850" stroke-width="1.5"/><path d="M0 .5H247" stroke="#999"/>
   <rect y="440" width="158" height="78" fill="url(#a)"/><path d="M0 440H183.5V503.5H0" fill="#8a4a4a" fill-opacity=".2" stroke="#944" /><path d="M54.5 460V492" stroke="#2020c0" stroke-width="1.5"/><circle cx="54.5" cy="492.5" r="5.5" fill="#129012"/><path d="M54 492.5H76" stroke="#b01010" stroke-width="1.5"/><path d="M74 487L84 492.5L74 498z" fill="#c01414"/><text x="86" y="497" font-family="Liberation Sans, sans-serif" font-weight="bold" font-size="12" fill="#d22">X</text></svg>`);

define('cad-app', `
  :host{display:grid;grid-template:42px 95px 1fr/minmax(0,1fr);min-height:100vh;margin-right:237px;position:relative}
  .head{display:grid;grid-template:25px 17px/42px minmax(0,1fr);background:#3b3b3b}
  app-logo{grid-row:1/3}
  main{display:grid;grid-template-columns:332px minmax(0,1fr);column-gap:3px;background:#eee;margin-top:-1px;height:calc(100vh - 136px);overflow:hidden}
  hole-dialog{position:absolute;left:67px;top:50px;width:490px}`,
  `<div class="head"><app-logo></app-logo><quick-bar></quick-bar><ribbon-tabs></ribbon-tabs></div>
   <ribbon-bar></ribbon-bar><main><model-browser></model-browser><model-view></model-view></main><hole-dialog></hole-dialog>`);
</script>
</body>
</html>
